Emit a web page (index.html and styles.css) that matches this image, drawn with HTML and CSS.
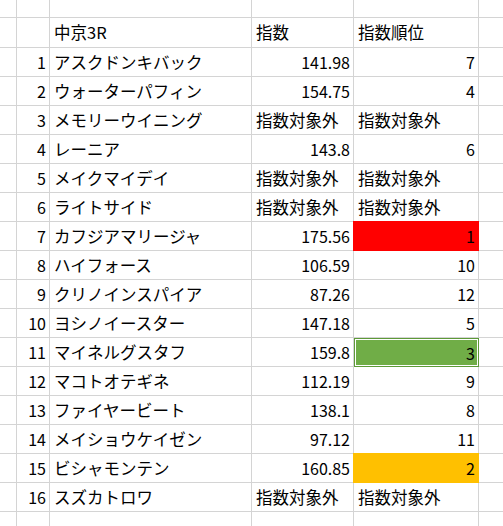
FILE: index.html
```html
<!DOCTYPE html>
<html lang="ja">
<head>
<meta charset="utf-8">
<link rel="stylesheet" href="styles.css">
</head>
<body>
<div class="sheet">
  <div class="c"></div><div class="c"></div><div class="c"></div><div class="c"></div><div class="c"></div><div class="c"></div>
  <div class="c"></div><div class="c"></div><div class="c t">中京3R</div><div class="c t">指数</div><div class="c t">指数順位</div><div class="c"></div>

  <div class="c"></div><div class="c n">1</div><div class="c t">アスクドンキバック</div><div class="c n">141.98</div><div class="c n">7</div><div class="c"></div>
  <div class="c"></div><div class="c n">2</div><div class="c t">ウォーターパフィン</div><div class="c n">154.75</div><div class="c n">4</div><div class="c"></div>
  <div class="c"></div><div class="c n">3</div><div class="c t">メモリーウイニング</div><div class="c t">指数対象外</div><div class="c t">指数対象外</div><div class="c"></div>
  <div class="c"></div><div class="c n">4</div><div class="c t">レーニア</div><div class="c n">143.8</div><div class="c n">6</div><div class="c"></div>
  <div class="c"></div><div class="c n">5</div><div class="c t">メイクマイデイ</div><div class="c t">指数対象外</div><div class="c t">指数対象外</div><div class="c"></div>
  <div class="c"></div><div class="c n">6</div><div class="c t">ライトサイド</div><div class="c t">指数対象外</div><div class="c t">指数対象外</div><div class="c"></div>
  <div class="c"></div><div class="c n">7</div><div class="c t">カフジアマリージャ</div><div class="c n">175.56</div><div class="c n red">1</div><div class="c"></div>
  <div class="c"></div><div class="c n">8</div><div class="c t">ハイフォース</div><div class="c n">106.59</div><div class="c n">10</div><div class="c"></div>
  <div class="c"></div><div class="c n">9</div><div class="c t">クリノインスパイア</div><div class="c n">87.26</div><div class="c n">12</div><div class="c"></div>
  <div class="c"></div><div class="c n">10</div><div class="c t">ヨシノイースター</div><div class="c n">147.18</div><div class="c n">5</div><div class="c"></div>
  <div class="c"></div><div class="c n">11</div><div class="c t">マイネルグスタフ</div><div class="c n">159.8</div><div class="c n green">3</div><div class="c"></div>
  <div class="c"></div><div class="c n">12</div><div class="c t">マコトオテギネ</div><div class="c n">112.19</div><div class="c n">9</div><div class="c"></div>
  <div class="c"></div><div class="c n">13</div><div class="c t">ファイヤービート</div><div class="c n">138.1</div><div class="c n">8</div><div class="c"></div>
  <div class="c"></div><div class="c n">14</div><div class="c t">メイショウケイゼン</div><div class="c n">97.12</div><div class="c n">11</div><div class="c"></div>
  <div class="c"></div><div class="c n">15</div><div class="c t">ビシャモンテン</div><div class="c n">160.85</div><div class="c n orange">2</div><div class="c"></div>
  <div class="c"></div><div class="c n">16</div><div class="c t">スズカトロワ</div><div class="c t">指数対象外</div><div class="c t">指数対象外</div><div class="c"></div>

  <div class="c"></div><div class="c"></div><div class="c"></div><div class="c"></div><div class="c"></div><div class="c"></div>
</div>
</body>
</html>
```

FILE: styles.css
```css
html, body {
  margin: 0;
  padding: 0;
  background: #ffffff;
  overflow: hidden;
}

.sheet {
  display: grid;
  grid-template-columns: 17px 33px 202px 102px 125px 40px;
  grid-template-rows: 18px 30px repeat(16, 29px) 20px;
  font-family: "Noto Sans CJK JP", "Noto Sans", sans-serif;
  font-size: 16px;
  color: #000000;
}

.c {
  box-sizing: border-box;
  border-right: 1px solid #d4d4d4;
  border-bottom: 1px solid #d4d4d4;
  display: flex;
  align-items: center;
  padding: 0 3px 0 4px;
  white-space: nowrap;
  overflow: visible;
  line-height: 1;
}

.t {
  justify-content: flex-start;
  font-size: 16.5px;
}

.n {
  justify-content: flex-end;
}

.red {
  background: #ff0000;
  border-color: #ff0000;
  box-shadow: -1px 0 0 #ff0000, 0 -1px 0 #ff0000, -1px -1px 0 #ff0000;
}

.orange {
  background: #ffc000;
  border-color: #ffc000;
  box-shadow: -1px 0 0 #ffc000, 0 -1px 0 #ffc000, -1px -1px 0 #ffc000;
}

.green {
  background: #70ad47;
  border: 1px solid #5d9a38;
  box-shadow: inset 0 0 0 1px #ffffff;
  padding-left: 3px;
}
```
